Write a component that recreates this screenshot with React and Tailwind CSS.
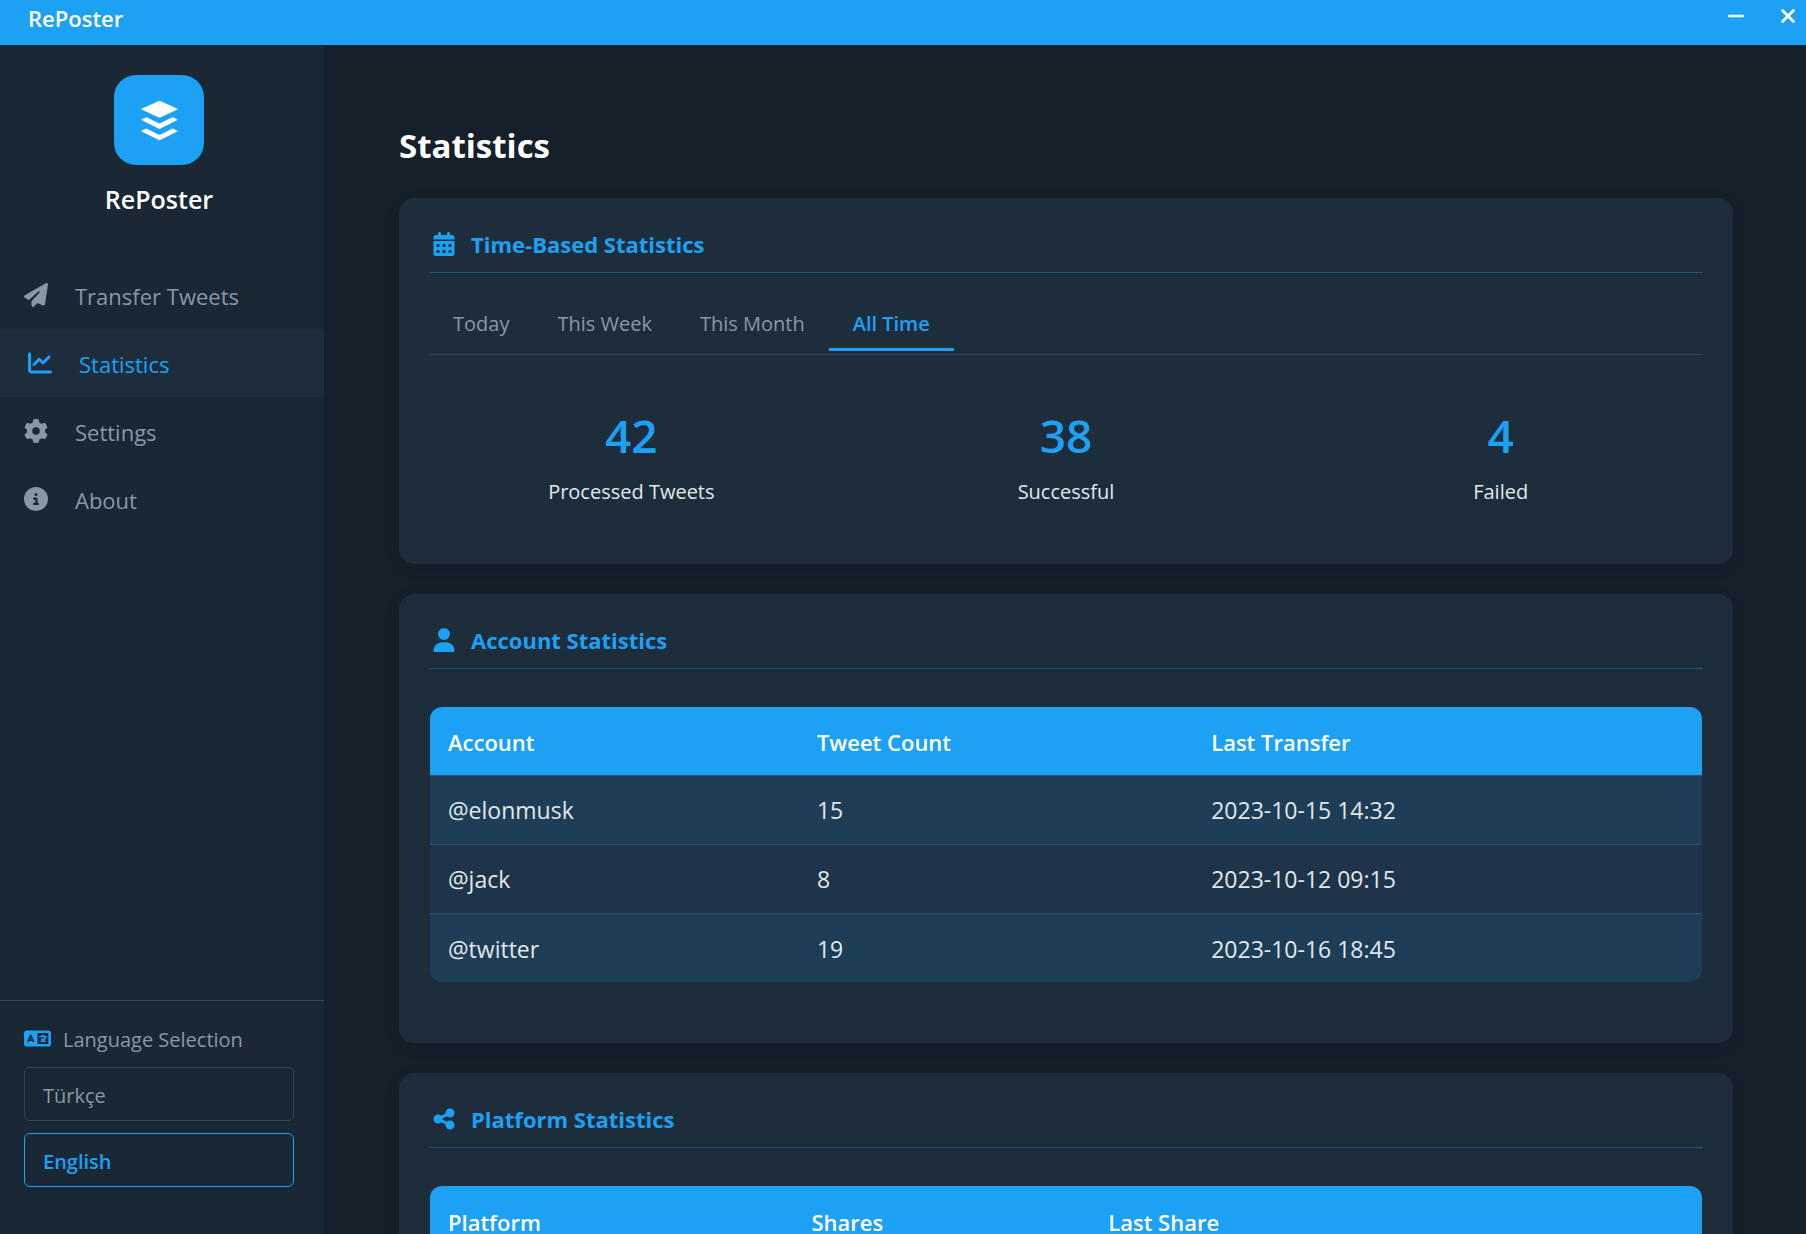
import { useState } from "react";
import {
  FaBuffer,
  FaCalendarDays,
  FaChartLine,
  FaCircleInfo,
  FaGear,
  FaLanguage,
  FaMinus,
  FaPaperPlane,
  FaShareNodes,
  FaUser,
  FaXmark,
} from "react-icons/fa6";

const NAV = [
  { label: "Transfer Tweets", Icon: FaPaperPlane },
  { label: "Statistics", Icon: FaChartLine },
  { label: "Settings", Icon: FaGear },
  { label: "About", Icon: FaCircleInfo },
];

const TABS = ["Today", "This Week", "This Month", "All Time"];

const STATS = [
  { value: "42", label: "Processed Tweets" },
  { value: "38", label: "Successful" },
  { value: "4", label: "Failed" },
];

const ACCOUNTS = [
  ["@elonmusk", "15", "2023-10-15 14:32"],
  ["@jack", "8", "2023-10-12 09:15"],
  ["@twitter", "19", "2023-10-16 18:45"],
];

function TitleBar() {
  return (
    <header className="flex h-[45px] shrink-0 items-start justify-between bg-[#1da1f4] pl-7 pr-2 text-white">
      <span className="pt-1 text-[22px] leading-7 font-semibold">RePoster</span>
      <div className="flex items-center gap-8 pt-1">
        <button type="button" aria-label="Minimize" className="flex h-6 w-5 items-center justify-center">
          <FaMinus className="size-5" />
        </button>
        <button type="button" aria-label="Close" className="flex h-6 w-5 items-center justify-center">
          <FaXmark className="size-[22px]" />
        </button>
      </div>
    </header>
  );
}

function Sidebar({ page, onPage, language, onLanguage }) {
  return (
    <aside className="flex w-[324px] shrink-0 flex-col bg-[#1a2734]">
      <div className="flex flex-col items-center pt-[30px] pr-1.5">
        <div className="flex size-[90px] items-center justify-center rounded-[22px] bg-[#1da1f4] text-white">
          <FaBuffer className="size-[45px]" />
        </div>
        <p className="mt-3.5 text-[25px] leading-10 font-semibold text-white">RePoster</p>
      </div>
      <nav className="mt-[42px]">
        {NAV.map(({ label, Icon }) => (
          <button
            key={label}
            type="button"
            aria-current={page === label ? "page" : undefined}
            onClick={() => onPage(label)}
            className={
              page === label
                ? "flex h-[68px] w-full items-center gap-[27px] bg-[#1e2d3c] pt-0.5 pl-7 text-[22px] text-[#1da1f4]"
                : "flex h-[68px] w-full items-center gap-[27px] pt-0.5 pl-6 text-[22px] text-[#8899a6]"
            }
          >
            <Icon className="mb-0.5 size-6" />
            {label}
          </button>
        ))}
      </nav>
      <section className="mt-auto border-t border-[#38444d] pt-[21px] pr-[30px] pb-[47px] pl-6">
        <h2 className="flex items-center gap-3 text-xl leading-9 text-[#8899a6]">
          <FaLanguage className="mb-1 size-[27px] text-[#1da1f4]" />
          Language Selection
        </h2>
        <div className="mt-[9px] flex flex-col gap-3">
          {["Türkçe", "English"].map((name) => (
            <button
              key={name}
              type="button"
              aria-pressed={language === name}
              onClick={() => onLanguage(name)}
              className={
                language === name
                  ? "h-[54px] rounded-md border border-[#1da1f4] px-[18px] pt-1 text-left text-xl font-semibold text-[#1da1f4]"
                  : "h-[54px] rounded-md border border-[#38444d] px-[18px] pt-1 text-left text-xl text-[#8899a6]"
              }
            >
              {name}
            </button>
          ))}
        </div>
      </section>
    </aside>
  );
}

function Card({ title, Icon, children }) {
  return (
    <section className="rounded-[15px] bg-[#1e2d3c] p-[30px] pt-7 shadow-[0_4px_15px_rgba(0,0,0,0.1)]">
      <h2 className="flex items-center gap-[15px] border-b border-[#1f5174] pb-2.5 pl-[3px] text-[22px] leading-9 font-bold text-[#1da1f4]">
        <Icon className="size-6" />
        {title}
      </h2>
      {children}
    </section>
  );
}

function DataTable({ columns, widths, rows }) {
  return (
    <div className="mx-px mt-[38px] overflow-hidden rounded-xl">
      <table className="w-full table-fixed text-left">
        <colgroup>
          {widths.map((width, i) => (
            <col key={i} className={width} />
          ))}
        </colgroup>
        <thead className="bg-[#1da1f4] text-white">
          <tr className="h-[68px]">
            {columns.map((column) => (
              <th key={column} scope="col" className="px-[18px] pt-1 text-[22px] font-semibold">
                {column}
              </th>
            ))}
          </tr>
        </thead>
        <tbody className="text-[23px] text-[#e1e8ed]">
          {rows.map((row) => (
            <tr key={row[0]} className="h-[69px] border-t border-[#38506a] odd:bg-[#1e3e57] even:bg-[#1f344a]">
              {row.map((cell) => (
                <td key={cell} className="px-[18px] pt-0.5">
                  {cell}
                </td>
              ))}
            </tr>
          ))}
        </tbody>
      </table>
    </div>
  );
}

export default function App() {
  const [page, setPage] = useState("Statistics");
  const [language, setLanguage] = useState("English");
  const [tab, setTab] = useState("All Time");

  return (
    <div className="flex h-screen flex-col overflow-hidden bg-[#16202a] font-['Open_Sans','Noto_Sans',sans-serif]">
      <TitleBar />
      <div className="flex min-h-0 flex-1">
        <Sidebar page={page} onPage={setPage} language={language} onLanguage={setLanguage} />
        <main className="min-w-0 flex-1 overflow-y-auto pt-[75px] pr-[73px] pl-[75px] [scrollbar-width:none]">
          <h1 className="text-[33px] leading-[52px] font-bold text-white">Statistics</h1>
          <div className="mt-[26px] flex flex-col gap-[30px]">
            <Card title="Time-Based Statistics" Icon={FaCalendarDays}>
              <div role="tablist" className="mt-[25px] flex border-b border-[#38444d] pb-[3px]">
                {TABS.map((name) => (
                  <button
                    key={name}
                    type="button"
                    role="tab"
                    aria-selected={tab === name}
                    onClick={() => setTab(name)}
                    className={
                      tab === name
                        ? "h-[53px] border-b-[3px] border-[#1da1f4] px-6 pt-0.5 text-xl font-semibold text-[#1da1f4]"
                        : "h-[53px] border-b-[3px] border-transparent px-6 pt-0.5 text-xl text-[#8899a6]"
                    }
                  >
                    {name}
                  </button>
                ))}
              </div>
              <dl className="grid grid-cols-3 gap-[30px] pt-[46px] pb-[27px] text-center">
                {STATS.map(({ value, label }) => (
                  <div key={label} className="flex flex-col-reverse gap-2">
                    <dt className="text-xl leading-[30px] text-[#e1e8ed]">{label}</dt>
                    <dd className="text-[46px] leading-[68px] font-semibold text-[#1da1f4]">{value}</dd>
                  </div>
                ))}
              </dl>
            </Card>
            <Card title="Account Statistics" Icon={FaUser}>
              <DataTable
                columns={["Account", "Tweet Count", "Last Transfer"]}
                widths={["w-[29%]", "w-[31%]", "w-[40%]"]}
                rows={ACCOUNTS}
              />
              <div className="h-[31px]" />
            </Card>
            <Card title="Platform Statistics" Icon={FaShareNodes}>
              <DataTable
                columns={["Platform", "Shares", "Last Share"]}
                widths={["w-2/7", "w-7/30", "w-auto"]}
                rows={[]}
              />
            </Card>
          </div>
        </main>
      </div>
    </div>
  );
}
